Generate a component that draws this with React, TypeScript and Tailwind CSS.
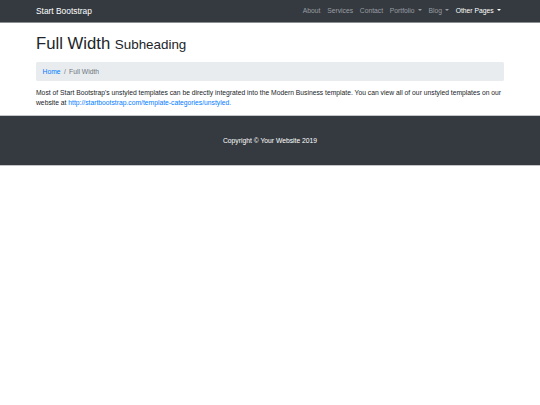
import React from "react";

function Caret() {
  return (
    <span className="inline-block w-0 h-0 ml-[3px] align-[1.7px] border-t-[2px] border-t-current border-x-[2px] border-x-transparent" />
  );
}

export default function App() {
  const links = [
    { label: "About" },
    { label: "Services" },
    { label: "Contact" },
    { label: "Portfolio", caret: true },
    { label: "Blog", caret: true },
    { label: "Other Pages", caret: true, active: true },
  ];
  return (
    <div className="w-[540px] min-h-[405px] bg-white font-['Liberation_Sans',Arial,sans-serif] text-[#212529]">
      <nav className="h-[23px] bg-[#343a40] border-b border-[#8c8f92]">
        <div className="w-[468px] mx-auto h-full flex items-center justify-between">
          <span className="text-[8.4px] text-white leading-none">Start Bootstrap</span>
          <ul className="flex items-center text-[6.75px] leading-none">
            {links.map((l) => (
              <li key={l.label} className="px-[3.4px]">
                <span className={l.active ? "text-white" : "text-[#9a9da0]"}>
                  {l.label}
                  {l.caret && <Caret />}
                </span>
              </li>
            ))}
          </ul>
        </div>
      </nav>

      <div className="w-[468px] mx-auto pt-[10px] pb-[7px]">
        <h1 className="text-[16.7px] leading-[20px] font-normal mb-[7px] pt-[1px]">
          Full Width <small className="text-[13.4px]">Subheading</small>
        </h1>
        <ol className="flex items-center bg-[#e9ecef] rounded-[1.6px] px-[6.6px] py-[4.6px] text-[6.75px] leading-[9.9px] mb-[6.6px]">
          <li className="text-[#007bff]">Home</li>
          <li className="text-[#6c757d] px-[3.3px]">/</li>
          <li className="text-[#6c757d]">Full Width</li>
        </ol>
        <p className="text-[6.75px] leading-[9.9px]">
          Most of Start Bootstrap's unstyled templates can be directly integrated into the Modern Business template. You can view all of our unstyled templates on our website at <span className="text-[#007bff]">http://startbootstrap.com/template-categories/unstyled.</span>
        </p>
      </div>

      <footer className="bg-[#343a40] border-y border-[#c4c5c7] py-[20px]">
        <p className="text-center text-white text-[6.75px] leading-[9.9px]">Copyright © Your Website 2019</p>
      </footer>
    </div>
  );
}
